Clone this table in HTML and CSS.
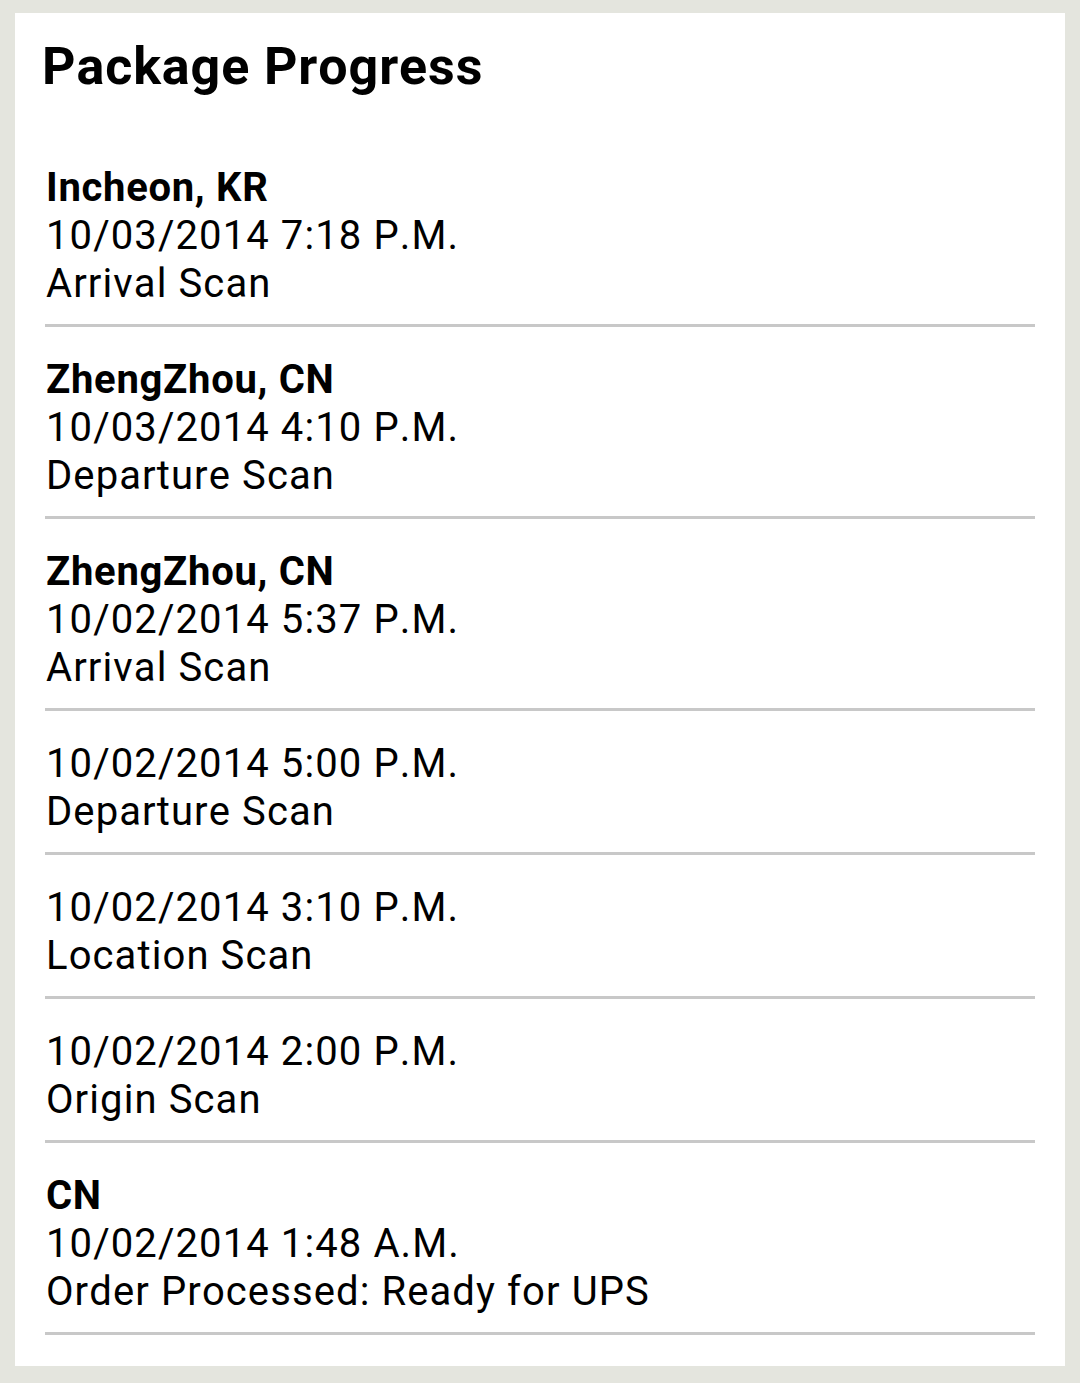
FILE: index.html
```html
<!DOCTYPE html>
<html>
<head>
<meta charset="utf-8">
<link rel="stylesheet" href="styles.css">
</head>
<body>
<div class="card">
  <h1 class="title">Package Progress</h1>
  <ul class="events">
    <li class="event">
      <div class="loc">Incheon, KR</div>
      <div class="line">10/03/2014 7:18 P.M.</div>
      <div class="line">Arrival Scan</div>
    </li>
    <li class="event">
      <div class="loc">ZhengZhou, CN</div>
      <div class="line">10/03/2014 4:10 P.M.</div>
      <div class="line">Departure Scan</div>
    </li>
    <li class="event">
      <div class="loc">ZhengZhou, CN</div>
      <div class="line">10/02/2014 5:37 P.M.</div>
      <div class="line">Arrival Scan</div>
    </li>
    <li class="event">
      <div class="line">10/02/2014 5:00 P.M.</div>
      <div class="line">Departure Scan</div>
    </li>
    <li class="event">
      <div class="line">10/02/2014 3:10 P.M.</div>
      <div class="line">Location Scan</div>
    </li>
    <li class="event">
      <div class="line">10/02/2014 2:00 P.M.</div>
      <div class="line">Origin Scan</div>
    </li>
    <li class="event">
      <div class="loc">CN</div>
      <div class="line">10/02/2014 1:48 A.M.</div>
      <div class="line">Order Processed: Ready for UPS</div>
    </li>
  </ul>
</div>
</body>
</html>
```
FILE: styles.css
```css
html, body {
  margin: 0;
  padding: 0;
}
body {
  background: #e4e5de;
  font-family: Roboto, "Liberation Sans", sans-serif;
  font-kerning: none;
  color: #000;
  width: 1080px;
  height: 1383px;
  overflow: hidden;
}
.card {
  margin: 13px 15px 0 15px;
  background: #fff;
  height: 1353px;
  box-sizing: border-box;
  padding: 24px 30px 0 30px;
}
.title {
  margin: 0 0 38px -3px;
  font-size: 52px;
  line-height: 60px;
  font-weight: 700;
  letter-spacing: 0.9px;
}
.events {
  list-style: none;
  margin: 0;
  padding: 0;
}
.event {
  padding: 29px 0 16px 1px;
  border-bottom: 3px solid #c8c8c8;
  font-size: 40px;
  line-height: 48px;
}
.line {
  letter-spacing: 1.1px;
}
.loc {
  font-weight: 700;
  letter-spacing: 0.7px;
}
```
